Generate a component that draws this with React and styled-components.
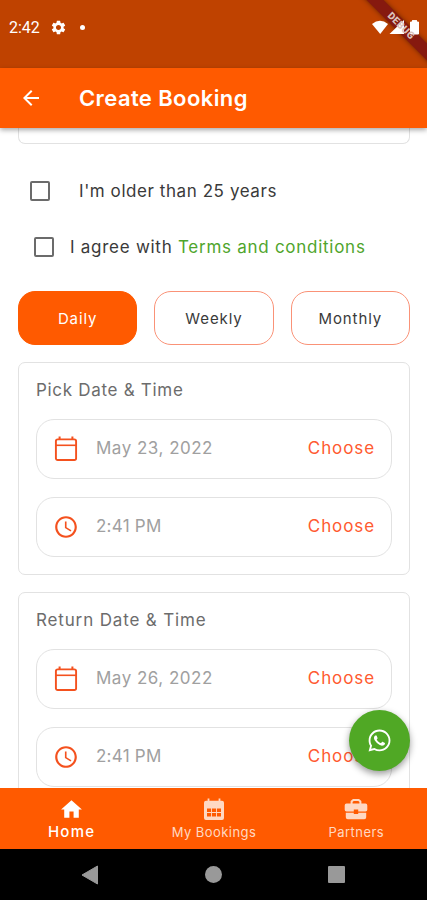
import React from "react";
import styled, { createGlobalStyle } from "styled-components";
import { MdSettings, MdArrowBack, MdHome, MdAccessTime } from "react-icons/md";
import { FaWhatsapp } from "react-icons/fa";

const GlobalStyle = createGlobalStyle`
  * {
    box-sizing: border-box;
  }
  body {
    margin: 0;
    background: #fff;
    font-family: Inter, "Open Sans", sans-serif;
    overflow: hidden;
  }
`;

const slots = [
  { title: "Pick Date & Time", space: 0.7, date: "May 23, 2022", time: "2:41 PM" },
  { title: "Return Date & Time", space: 0.85, date: "May 26, 2022", time: "2:41 PM" },
];

const CalendarIcon = () => (
  <svg width="24" height="26" viewBox="0 0 24 26" fill="none" stroke="#f4511e">
    <rect x="1.9" y="3.4" width="20.2" height="20.6" rx="1.8" strokeWidth="1.9" />
    <path d="M2 9.3h20" strokeWidth="1.6" />
    <path d="M5.6 .6v3M18.4 .6v3" strokeWidth="2" />
  </svg>
);

const BookingsIcon = () => (
  <svg width="22" height="23" viewBox="0 0 22 23" fill="currentColor">
    <path d="M3 2.8h1.6V.4h1.8v2.4h9.2V.4h1.8v2.4H19a2 2 0 0 1 2 2V9H1V4.8a2 2 0 0 1 2-2z" />
    <path
      fillRule="evenodd"
      d="M1 8.8h20V20a2 2 0 0 1-2 2H3a2 2 0 0 1-2-2zM4 10.6v3.5h4.1v-3.5zM9 10.6v3.5h4v-3.5zM13.9 10.6v3.5h4.1v-3.5zM4 15v3.5h4.1v-3.5zM9 15v3.5h4v-3.5zM13.9 15v3.5h4.1v-3.5z"
    />
  </svg>
);

const PartnersIcon = () => (
  <svg width="24" height="23" viewBox="0 0 24 23" fill="currentColor">
    <path
      d="M7.6 6V3.6L9.3 2h5.4l1.7 1.6V6"
      fill="none"
      stroke="currentColor"
      strokeWidth="2"
      strokeLinejoin="round"
    />
    <path d="M2.5 5.6h19a1.8 1.8 0 0 1 1.8 1.8v4.4a1.8 1.8 0 0 1-1.8 1.8h-7.3v-2.2H9.8v2.2H2.5a1.8 1.8 0 0 1-1.8-1.8V7.4a1.8 1.8 0 0 1 1.8-1.8z" />
    <path d="M1.8 14.8h8v1.3h4.4v-1.3h8v4.4a2 2 0 0 1-2 2H3.8a2 2 0 0 1-2-2z" />
  </svg>
);

function DateCard({ title, space, date, time }) {
  return (
    <Card>
      <CardTitle $space={space}>{title}</CardTitle>
      <Field>
        <FieldIcon>
          <CalendarIcon />
        </FieldIcon>
        <FieldValue $space={0.5}>{date}</FieldValue>
        <Choose>Choose</Choose>
      </Field>
      <Field>
        <FieldIcon>
          <MdAccessTime size={26} />
        </FieldIcon>
        <FieldValue $space={0.25}>{time}</FieldValue>
        <Choose>Choose</Choose>
      </Field>
    </Card>
  );
}

function App() {
  return (
    <Screen>
      <GlobalStyle />
      <StatusBar>
        <Clock>2:42</Clock>
        <MdSettings size={17} />
        <Dot />
        <Ribbon />
        <StatusIcons>
          <svg width="50" height="16" viewBox="0 0 50 16" fill="#fff">
            <path d="M0 4Q8 -2.4 16 4L8.2 14z" />
            <path d="M17.5 14L32 0v14z" />
            <path d="M38.5 2h2V.3h4V2h2v12h-8z" stroke="#fff" strokeLinejoin="round" />
          </svg>
        </StatusIcons>
        <RibbonText>DEBUG</RibbonText>
      </StatusBar>
      <AppBar>
        <MdArrowBack size={24} />
        <h1>Create Booking</h1>
      </AppBar>
      <Content>
        <CardEnd />
        <CheckRow $left={12} $gap={29} $height={57}>
          <Box />
          <CheckLabel $space={0.57}>I'm older than 25 years</CheckLabel>
        </CheckRow>
        <CheckRow $left={16} $gap={16} $height={56}>
          <Box />
          <CheckLabel $space={0.73}>
            I agree with <a>Terms and conditions</a>
          </CheckLabel>
        </CheckRow>
        <Periods>
          <Period $active>Daily</Period>
          <Period>Weekly</Period>
          <Period>Monthly</Period>
        </Periods>
        {slots.map((slot) => (
          <DateCard key={slot.title} {...slot} />
        ))}
        <Fab>
          <FaWhatsapp size={25} />
        </Fab>
      </Content>
      <BottomNav>
        <NavItem $active>
          <MdHome size={25} />
          <span>Home</span>
        </NavItem>
        <NavItem>
          <BookingsIcon />
          <span>My Bookings</span>
        </NavItem>
        <NavItem>
          <PartnersIcon />
          <span>Partners</span>
        </NavItem>
      </BottomNav>
      <SystemNav>
        <svg width="18" height="20" viewBox="0 0 18 20" fill="#999">
          <path d="M1 10L16.5 1v18z" stroke="#999" strokeLinejoin="round" />
        </svg>
        <Circle />
        <Square />
      </SystemNav>
    </Screen>
  );
}

export default App;

const Screen = styled.div`
  width: 427px;
  height: 900px;
  display: flex;
  flex-direction: column;
  overflow: hidden;
  background: #fff;
`;

const StatusBar = styled.div`
  position: relative;
  flex: 0 0 68px;
  display: flex;
  align-items: center;
  padding: 0 0 14px 9px;
  background: #bf4200;
  color: #fff;
  overflow: hidden;
`;

const Clock = styled.span`
  width: 41px;
  font-family: Roboto, sans-serif;
  font-size: 16px;
  line-height: 20px;
  padding-top: 2px;
`;

const Dot = styled.i`
  width: 5px;
  height: 5px;
  margin-left: 13px;
  border-radius: 50%;
  background: #fff;
`;

/* debug ribbon runs across the corner, below the system icons */
const Ribbon = styled.div`
  position: absolute;
  left: 341px;
  top: 20px;
  width: 120px;
  height: 12px;
  background: #86190f;
  box-shadow: 0 0 5px rgba(0, 0, 0, 0.45);
  transform: rotate(45deg);
`;

const RibbonText = styled.span`
  position: absolute;
  left: 371px;
  top: 20px;
  width: 60px;
  font-family: Roboto, sans-serif;
  font-size: 10px;
  font-weight: 900;
  line-height: 12px;
  letter-spacing: 0.3px;
  text-align: center;
  color: #dcc3bc;
  transform: rotate(45deg);
`;

const StatusIcons = styled.div`
  position: absolute;
  left: 372px;
  top: 20px;
  display: flex;
`;

const AppBar = styled.header`
  position: relative;
  z-index: 1;
  flex: 0 0 60px;
  display: flex;
  align-items: center;
  gap: 36px;
  padding-left: 19px;
  background: #ff5a00;
  color: #fff;
  box-shadow: 0 2px 5px rgba(0, 0, 0, 0.35);
  h1 {
    margin: 0;
    font-size: 22px;
    font-weight: 600;
    letter-spacing: 0.4px;
  }
`;

const Content = styled.main`
  position: relative;
  flex: 1;
  min-height: 0;
  padding: 0 17px 0 18px;
  overflow: hidden;
`;

const CardEnd = styled.div`
  height: 16px;
  margin-bottom: 18px;
  border: 1px solid #e2e2e2;
  border-top: 0;
  border-radius: 0 0 7px 7px;
`;

const CheckRow = styled.div`
  display: flex;
  align-items: center;
  height: ${(p) => p.$height}px;
  padding-left: ${(p) => p.$left}px;
  gap: ${(p) => p.$gap}px;
`;

const Box = styled.span`
  width: 20px;
  height: 20px;
  border: 2px solid #6b6b6b;
  border-radius: 2px;
`;

const CheckLabel = styled.span`
  font-size: 17px;
  color: #3a3a3a;
  white-space: pre;
  letter-spacing: ${(p) => p.$space}px;
  a {
    color: #4fa52c;
  }
`;

const Periods = styled.div`
  display: flex;
  gap: 17px;
  margin: 16px 0 17px;
`;

const Period = styled.button`
  flex: 1;
  height: 54px;
  padding: 0;
  border: 1px solid ${(p) => (p.$active ? "#ff5a00" : "#fa9277")};
  border-radius: 17px;
  background: ${(p) => (p.$active ? "#ff5a00" : "#fff")};
  color: ${(p) => (p.$active ? "#fff" : "#3a3a3a")};
  font-family: inherit;
  font-size: 15px;
  letter-spacing: 0.9px;
`;

const Card = styled.section`
  height: 213px;
  margin-bottom: 17px;
  padding: 16px 17px 17px;
  border: 1px solid #e2e2e2;
  border-radius: 7px;
`;

const CardTitle = styled.h2`
  margin: 0 0 18px;
  font-size: 17px;
  font-weight: 400;
  line-height: 22px;
  color: #6c6c6c;
  letter-spacing: ${(p) => p.$space}px;
`;

const Field = styled.div`
  display: flex;
  align-items: center;
  height: 60px;
  padding: 0 16px 0 15px;
  border: 1px solid #e2e2e2;
  border-radius: 18px;
  & + & {
    margin-top: 18px;
  }
`;

const FieldIcon = styled.span`
  width: 28px;
  margin-right: 16px;
  display: flex;
  justify-content: center;
  color: #f4511e;
`;

const FieldValue = styled.span`
  flex: 1;
  padding-bottom: 2px;
  font-size: 17px;
  color: #a0a0a0;
  letter-spacing: ${(p) => p.$space}px;
`;

const Choose = styled.span`
  padding-bottom: 2px;
  font-size: 17px;
  color: #ff5a30;
  letter-spacing: 0.9px;
`;

const Fab = styled.button`
  position: absolute;
  right: 17px;
  bottom: 17px;
  width: 61px;
  height: 61px;
  padding: 0;
  display: flex;
  align-items: center;
  justify-content: center;
  border: 0;
  border-radius: 50%;
  background: #50a825;
  color: #fff;
  box-shadow: 0 3px 7px rgba(0, 0, 0, 0.4);
`;

const BottomNav = styled.nav`
  flex: 0 0 61px;
  display: flex;
  background: #ff5a00;
`;

const NavItem = styled.div`
  flex: 1;
  display: flex;
  flex-direction: column;
  align-items: center;
  padding: 9px 0 0 1px;
  color: ${(p) => (p.$active ? "#fff" : "#ffd8c2")};
  svg {
    flex: 0 0 25px;
  }
  span {
    font-size: ${(p) => (p.$active ? 15 : 13)}px;
    font-weight: ${(p) => (p.$active ? 500 : 400)};
    line-height: 20px;
    letter-spacing: ${(p) => (p.$active ? 1.3 : 0.45)}px;
  }
`;

const SystemNav = styled.div`
  flex: 0 0 51px;
  display: flex;
  align-items: center;
  justify-content: space-between;
  padding: 0 82px 0 81px;
  background: #000;
`;

const Circle = styled.i`
  width: 17px;
  height: 17px;
  border-radius: 50%;
  background: #999;
`;

const Square = styled.i`
  width: 17px;
  height: 17px;
  border-radius: 1px;
  background: #999;
`;
